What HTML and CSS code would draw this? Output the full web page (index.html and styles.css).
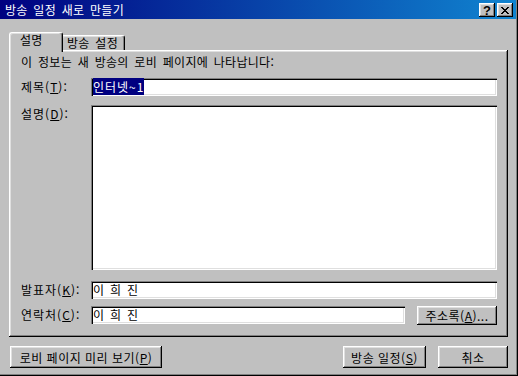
FILE: index.html
```html
<!DOCTYPE html>
<html lang="ko">
<head>
    <meta charset="UTF-8">
    <meta name="viewport" content="width=device-width, initial-scale=1.0">
    <title>방송 일정 새로 만들기</title>
    <link rel="stylesheet" href="styles.css">
</head>
<body>
    <div class="window">
        <div class="titlebar">
            <span class="title">방송 일정 새로 만들기</span>
            <div class="caption-buttons">
                <button class="caption-btn help">?</button>
                <button class="caption-btn close">
                    <svg width="8" height="7" viewBox="0 0 8 7">
                        <path d="M0 0h2v1h1v1h2v-1h1v-1h2v1h-1v1h-1v1h-1v1h1v1h1v1h1v1h-2v-1h-1v-1h-2v1h-1v1h-2v-1h1v-1h1v-1h1v-1h-1v-1h-1v-1h-1z" fill="#000"/>
                    </svg>
                </button>
            </div>
        </div>

        <div class="content">
            <div class="tabs">
                <div class="tab active">설명</div>
                <div class="tab">방송 설정</div>
            </div>

            <div class="panel">
                <div class="intro">이 정보는 새 방송의 로비 페이지에 나타납니다:</div>

                <label class="label">제목(<u>T</u>):</label>
                <div class="field"><span class="selected">인터넷~1</span></div>

                <label class="label">설명(<u>D</u>):</label>
                <div class="field memo"></div>

                <label class="label gap-top">발표자(<u>K</u>):</label>
                <div class="field gap-top">이 희 진</div>

                <label class="label">연락처(<u>C</u>):</label>
                <div class="field-with-btn">
                    <div class="field">이 희 진</div>
                    <button class="btn address">주소록(<u>A</u>)...</button>
                </div>
            </div>

            <div class="actions">
                <button class="btn preview">로비 페이지 미리 보기(<u>P</u>)</button>
                <div class="right-actions">
                    <button class="btn schedule">방송 일정(<u>S</u>)</button>
                    <button class="btn cancel">취소</button>
                </div>
            </div>
        </div>
    </div>
</body>
</html>
```

FILE: styles.css
```css
body {
    margin: 0;
    background: #c0c0c0;
    font-family: "Noto Sans CJK KR", "Liberation Sans", sans-serif;
    font-size: 12px;
    letter-spacing: 0.3px;
    word-spacing: 2px;
    color: #000;
}

.window {
    width: 518px;
    height: 376px;
    box-sizing: border-box;
    padding: 0 2px 2px 0;
    background: #c0c0c0;
    box-shadow: inset -1px -1px #000, inset -2px -2px #808080;
    display: flex;
    flex-direction: column;
}

.titlebar {
    height: 19px;
    display: flex;
    justify-content: space-between;
    padding: 0 3px 0 5px;
    background: linear-gradient(90deg, #000080 0%, #1084d0 100%);
    color: #fff;
}

.title {
    line-height: 19px;
}

.caption-buttons {
    display: flex;
    gap: 2px;
    margin-top: 3px;
}

.caption-btn {
    width: 16px;
    height: 14px;
    padding: 0;
    border: none;
    background: #c0c0c0;
    box-shadow: inset -1px -1px #000, inset 1px 1px #fff, inset -2px -2px #808080, inset 2px 2px #dfdfdf;
    display: flex;
    justify-content: center;
    align-items: center;
}

.caption-btn.help {
    font-family: "Liberation Sans", sans-serif;
    font-weight: bold;
    font-size: 13px;
    line-height: 14px;
    letter-spacing: 0;
    padding-top: 1px;
}

.content {
    padding: 13px 8px 0 9px;
    display: flex;
    flex-direction: column;
}

.tabs {
    display: flex;
    align-items: flex-end;
    height: 18px;
}

.tab {
    box-sizing: border-box;
    height: 15px;
    border: 1px solid;
    border-color: #fff #000 transparent #fff;
    border-bottom: none;
    border-radius: 3px 3px 0 0;
    box-shadow: inset -1px 0 #808080, inset 1px 1px #dfdfdf;
    padding: 0 6px 0 5px;
    line-height: 13px;
    background: #c0c0c0;
}

.tab.active {
    position: relative;
    z-index: 1;
    width: 54px;
    height: 20px;
    margin-bottom: -2px;
    margin-right: -2px;
    padding-left: 10px;
    line-height: 14px;
}

.panel {
    height: 287px;
    box-sizing: border-box;
    padding: 5px 11px 0 11px;
    box-shadow: inset -1px -1px #000, inset 1px 1px #fff, inset -2px -2px #808080, inset 2px 2px #dfdfdf;
    display: grid;
    grid-template-columns: 71px 1fr;
    grid-template-rows: 14px 18px 165px 18px 19px;
    row-gap: 9px;
    align-content: start;
}

.intro {
    grid-column: 1 / 3;
    line-height: 14px;
    padding-left: 1px;
}

.label {
    line-height: 18px;
    letter-spacing: 1px;
    padding-left: 1px;
}

.gap-top {
    margin-top: 2px;
}

.field {
    box-sizing: border-box;
    height: 18px;
    background: #fff;
    padding: 0 2px;
    line-height: 17px;
    box-shadow: inset 1px 1px #808080, inset 2px 2px #000, inset -1px -1px #fff, inset -2px -2px #dfdfdf;
}

.field.memo {
    height: 165px;
}

.selected {
    background: #000080;
    color: #fff;
    letter-spacing: 1px;
}

.field-with-btn {
    display: flex;
    gap: 12px;
}

.field-with-btn .field {
    flex: 1;
}

.btn {
    box-sizing: border-box;
    padding: 0;
    border: none;
    background: #c0c0c0;
    font: inherit;
    letter-spacing: 0.5px;
    color: #000;
    box-shadow: inset -1px -1px #000, inset 1px 1px #fff, inset -2px -2px #808080, inset 2px 2px #dfdfdf;
}

.btn.address {
    width: 80px;
    height: 19px;
}

.actions {
    display: flex;
    justify-content: space-between;
    margin-top: 9px;
    padding-left: 1px;
}

.right-actions {
    display: flex;
    gap: 12px;
}

.btn.preview {
    width: 152px;
    height: 22px;
}

.btn.schedule {
    width: 83px;
    height: 22px;
}

.btn.cancel {
    width: 70px;
    height: 22px;
}
```
